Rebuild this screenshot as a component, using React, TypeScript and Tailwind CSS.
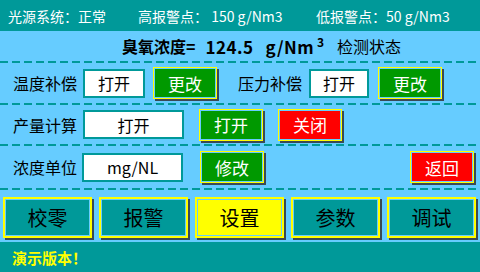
import React from 'react';

const font = { fontFamily: '"Noto Sans CJK SC", "Noto Sans", sans-serif' };

function Dash() {
  return <div className="h-[2px] w-full shrink-0 bg-[linear-gradient(to_right,#009999_8px,transparent_8px)] bg-[length:12px_2px]" />;
}

function Box({ text, w }: { text: string; w: string }) {
  return (
    <div className={`${w} h-[29px] border-2 border-[#009999] bg-white flex items-center justify-center text-[16px] text-black leading-none`}>
      {text}
    </div>
  );
}

function Btn({ text, color, className = '' }: { text: string; color: 'green' | 'red'; className?: string }) {
  return (
    <div className={`w-[64px] h-[32px] border border-[#ffff00] p-[1px] bg-[#66ccff] shadow-[2px_2px_0_#3a4a55] ${className}`}>
      <div className={`w-full h-full flex items-center justify-center text-white text-[17px] leading-none ${color === 'green' ? 'bg-[#009900]' : 'bg-[#ff0000]'}`}>
        {text}
      </div>
    </div>
  );
}

function BigBtn({ text, active = false }: { text: string; active?: boolean }) {
  return (
    <div className="w-[89px] h-[41px] border-2 border-[#ffff00] p-[1px] bg-[#66ccff] shadow-[2px_2px_0_#3a4a55]">
      <div className={`w-full h-full flex items-center justify-center text-black text-[20px] leading-none ${active ? 'bg-[#ffff00]' : 'bg-[#009999]'}`}>
        {text}
      </div>
    </div>
  );
}

export default function App() {
  return (
    <div className="w-[480px] h-[272px] bg-[#66ccff] flex flex-col overflow-hidden" style={font}>
      {/* status bar */}
      <div className="h-[31px] shrink-0 bg-[#009999] flex items-center pl-[8px] text-white text-[14px] leading-none">
        <span className="w-[130px]">光源系统：正常</span>
        <span className="w-[178px]">高报警点：&nbsp;150 g/Nm3</span>
        <span>低报警点：50 g/Nm3</span>
      </div>

      {/* title */}
      <div className="h-[30px] shrink-0 flex items-center pl-[122px] text-black leading-none">
        <span className="w-[215px] flex items-center font-bold text-[16px]">
          <span>臭氧浓度=</span>
          <span className="ml-[10px] text-[17px] tracking-[0.5px]">124.5</span>
          <span className="ml-[12px] text-[17px] tracking-[0.5px]">g/Nm</span>
          <span className="ml-[3px] text-[12px] -translate-y-[4px]">3</span>
        </span>
        <span className="text-[16px]">检测状态</span>
      </div>
      <Dash />

      {/* row 1 */}
      <div className="h-[40px] shrink-0 flex items-center pl-[13px] text-[16px] text-black">
        <span className="w-[70px]">温度补偿</span>
        <Box text="打开" w="w-[62px]" />
        <Btn text="更改" color="green" className="ml-[8px]" />
        <span className="w-[71px] ml-[21px]">压力补偿</span>
        <Box text="打开" w="w-[60px]" />
        <Btn text="更改" color="green" className="ml-[9px]" />
      </div>
      <Dash />

      {/* row 2 */}
      <div className="h-[39px] shrink-0 flex items-center pl-[13px] text-[16px] text-black">
        <span className="w-[70px]">产量计算</span>
        <Box text="打开" w="w-[101px]" />
        <Btn text="打开" color="green" className="ml-[15px]" />
        <Btn text="关闭" color="red" className="ml-[15px]" />
      </div>
      <Dash />

      {/* row 3 */}
      <div className="h-[42px] shrink-0 flex items-center pl-[13px] text-[16px] text-black">
        <span className="w-[69px]">浓度单位</span>
        <Box text="mg/NL" w="w-[101px]" />
        <Btn text="修改" color="green" className="ml-[17px]" />
        <Btn text="返回" color="red" className="ml-[146px]" />
      </div>
      <Dash />

      {/* menu */}
      <div className="h-[52px] shrink-0 flex items-start pt-[7px] pl-[3px] gap-[7px]">
        <BigBtn text="校零" />
        <BigBtn text="报警" />
        <BigBtn text="设置" active />
        <BigBtn text="参数" />
        <BigBtn text="调试" />
      </div>

      {/* footer */}
      <div className="flex-1 bg-[#009999] flex items-center pl-[12px] text-[#ffff00] font-bold text-[15px] leading-none">
        演示版本！
      </div>
    </div>
  );
}
